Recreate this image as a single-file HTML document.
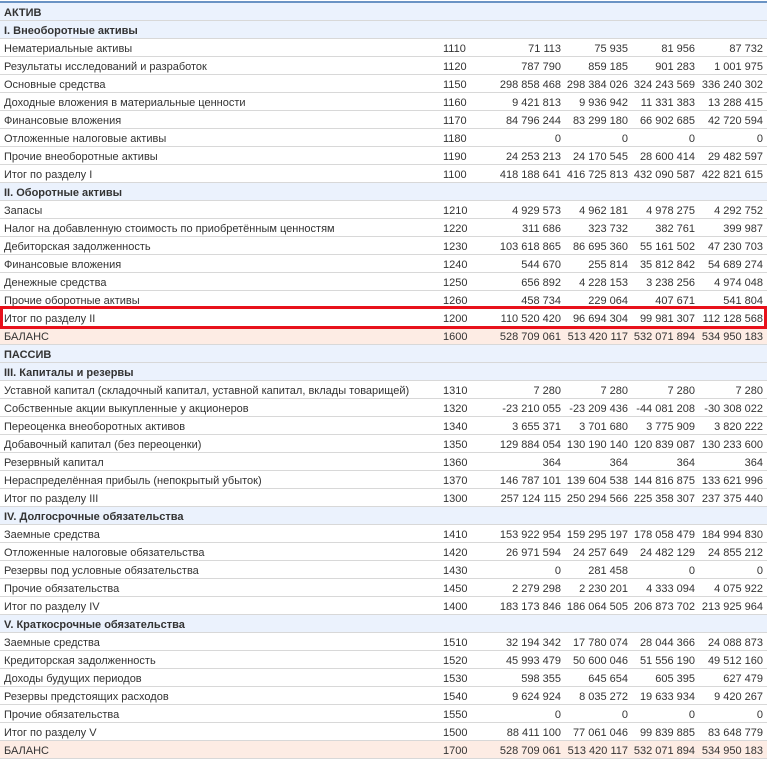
<!DOCTYPE html>
<html><head><meta charset="utf-8"><style>
body{margin:0;width:767px;height:758px;overflow:hidden;background:#fff;font-family:"Liberation Sans",Arial,sans-serif;font-size:11px;color:#333;position:relative}
.top{position:absolute;left:0;top:1px;width:767px;height:2px;background:#6a93c4}
.r{position:absolute;left:0;width:767px;height:17px;border-bottom:1px solid #d8d8d8;line-height:18px;white-space:nowrap}
.r span{position:absolute;top:1px}
.h{background:#ebf2fd;font-weight:bold}
.b{background:#fdece4}
.t{left:4px}.c{left:443px}.n1{right:206px}.n2{right:139px}.n3{right:72px}.n4{right:4px}
.red{position:absolute;left:0;top:306px;width:761px;height:17px;border:3px solid #e8111b}
</style></head><body>
<div class="top"></div>
<div class="r h" style="top:3px"><span class="t">АКТИВ</span></div>
<div class="r h" style="top:21px"><span class="t">I. Внеоборотные активы</span></div>
<div class="r" style="top:39px"><span class="t">Нематериальные активы</span><span class="c">1110</span><span class="n1">71 113</span><span class="n2">75 935</span><span class="n3">81 956</span><span class="n4">87 732</span></div>
<div class="r" style="top:57px"><span class="t">Результаты исследований и разработок</span><span class="c">1120</span><span class="n1">787 790</span><span class="n2">859 185</span><span class="n3">901 283</span><span class="n4">1 001 975</span></div>
<div class="r" style="top:75px"><span class="t">Основные средства</span><span class="c">1150</span><span class="n1">298 858 468</span><span class="n2">298 384 026</span><span class="n3">324 243 569</span><span class="n4">336 240 302</span></div>
<div class="r" style="top:93px"><span class="t">Доходные вложения в материальные ценности</span><span class="c">1160</span><span class="n1">9 421 813</span><span class="n2">9 936 942</span><span class="n3">11 331 383</span><span class="n4">13 288 415</span></div>
<div class="r" style="top:111px"><span class="t">Финансовые вложения</span><span class="c">1170</span><span class="n1">84 796 244</span><span class="n2">83 299 180</span><span class="n3">66 902 685</span><span class="n4">42 720 594</span></div>
<div class="r" style="top:129px"><span class="t">Отложенные налоговые активы</span><span class="c">1180</span><span class="n1">0</span><span class="n2">0</span><span class="n3">0</span><span class="n4">0</span></div>
<div class="r" style="top:147px"><span class="t">Прочие внеоборотные активы</span><span class="c">1190</span><span class="n1">24 253 213</span><span class="n2">24 170 545</span><span class="n3">28 600 414</span><span class="n4">29 482 597</span></div>
<div class="r" style="top:165px"><span class="t">Итог по разделу I</span><span class="c">1100</span><span class="n1">418 188 641</span><span class="n2">416 725 813</span><span class="n3">432 090 587</span><span class="n4">422 821 615</span></div>
<div class="r h" style="top:183px"><span class="t">II. Оборотные активы</span></div>
<div class="r" style="top:201px"><span class="t">Запасы</span><span class="c">1210</span><span class="n1">4 929 573</span><span class="n2">4 962 181</span><span class="n3">4 978 275</span><span class="n4">4 292 752</span></div>
<div class="r" style="top:219px"><span class="t">Налог на добавленную стоимость по приобретённым ценностям</span><span class="c">1220</span><span class="n1">311 686</span><span class="n2">323 732</span><span class="n3">382 761</span><span class="n4">399 987</span></div>
<div class="r" style="top:237px"><span class="t">Дебиторская задолженность</span><span class="c">1230</span><span class="n1">103 618 865</span><span class="n2">86 695 360</span><span class="n3">55 161 502</span><span class="n4">47 230 703</span></div>
<div class="r" style="top:255px"><span class="t">Финансовые вложения</span><span class="c">1240</span><span class="n1">544 670</span><span class="n2">255 814</span><span class="n3">35 812 842</span><span class="n4">54 689 274</span></div>
<div class="r" style="top:273px"><span class="t">Денежные средства</span><span class="c">1250</span><span class="n1">656 892</span><span class="n2">4 228 153</span><span class="n3">3 238 256</span><span class="n4">4 974 048</span></div>
<div class="r" style="top:291px"><span class="t">Прочие оборотные активы</span><span class="c">1260</span><span class="n1">458 734</span><span class="n2">229 064</span><span class="n3">407 671</span><span class="n4">541 804</span></div>
<div class="r" style="top:309px"><span class="t">Итог по разделу II</span><span class="c">1200</span><span class="n1">110 520 420</span><span class="n2">96 694 304</span><span class="n3">99 981 307</span><span class="n4">112 128 568</span></div>
<div class="r b" style="top:327px"><span class="t">БАЛАНС</span><span class="c">1600</span><span class="n1">528 709 061</span><span class="n2">513 420 117</span><span class="n3">532 071 894</span><span class="n4">534 950 183</span></div>
<div class="r h" style="top:345px"><span class="t">ПАССИВ</span></div>
<div class="r h" style="top:363px"><span class="t">III. Капиталы и резервы</span></div>
<div class="r" style="top:381px"><span class="t">Уставной капитал (складочный капитал, уставной капитал, вклады товарищей)</span><span class="c">1310</span><span class="n1">7 280</span><span class="n2">7 280</span><span class="n3">7 280</span><span class="n4">7 280</span></div>
<div class="r" style="top:399px"><span class="t">Собственные акции выкупленные у акционеров</span><span class="c">1320</span><span class="n1">-23 210 055</span><span class="n2">-23 209 436</span><span class="n3">-44 081 208</span><span class="n4">-30 308 022</span></div>
<div class="r" style="top:417px"><span class="t">Переоценка внеоборотных активов</span><span class="c">1340</span><span class="n1">3 655 371</span><span class="n2">3 701 680</span><span class="n3">3 775 909</span><span class="n4">3 820 222</span></div>
<div class="r" style="top:435px"><span class="t">Добавочный капитал (без переоценки)</span><span class="c">1350</span><span class="n1">129 884 054</span><span class="n2">130 190 140</span><span class="n3">120 839 087</span><span class="n4">130 233 600</span></div>
<div class="r" style="top:453px"><span class="t">Резервный капитал</span><span class="c">1360</span><span class="n1">364</span><span class="n2">364</span><span class="n3">364</span><span class="n4">364</span></div>
<div class="r" style="top:471px"><span class="t">Нераспределённая прибыль (непокрытый убыток)</span><span class="c">1370</span><span class="n1">146 787 101</span><span class="n2">139 604 538</span><span class="n3">144 816 875</span><span class="n4">133 621 996</span></div>
<div class="r" style="top:489px"><span class="t">Итог по разделу III</span><span class="c">1300</span><span class="n1">257 124 115</span><span class="n2">250 294 566</span><span class="n3">225 358 307</span><span class="n4">237 375 440</span></div>
<div class="r h" style="top:507px"><span class="t">IV. Долгосрочные обязательства</span></div>
<div class="r" style="top:525px"><span class="t">Заемные средства</span><span class="c">1410</span><span class="n1">153 922 954</span><span class="n2">159 295 197</span><span class="n3">178 058 479</span><span class="n4">184 994 830</span></div>
<div class="r" style="top:543px"><span class="t">Отложенные налоговые обязательства</span><span class="c">1420</span><span class="n1">26 971 594</span><span class="n2">24 257 649</span><span class="n3">24 482 129</span><span class="n4">24 855 212</span></div>
<div class="r" style="top:561px"><span class="t">Резервы под условные обязательства</span><span class="c">1430</span><span class="n1">0</span><span class="n2">281 458</span><span class="n3">0</span><span class="n4">0</span></div>
<div class="r" style="top:579px"><span class="t">Прочие обязательства</span><span class="c">1450</span><span class="n1">2 279 298</span><span class="n2">2 230 201</span><span class="n3">4 333 094</span><span class="n4">4 075 922</span></div>
<div class="r" style="top:597px"><span class="t">Итог по разделу IV</span><span class="c">1400</span><span class="n1">183 173 846</span><span class="n2">186 064 505</span><span class="n3">206 873 702</span><span class="n4">213 925 964</span></div>
<div class="r h" style="top:615px"><span class="t">V. Краткосрочные обязательства</span></div>
<div class="r" style="top:633px"><span class="t">Заемные средства</span><span class="c">1510</span><span class="n1">32 194 342</span><span class="n2">17 780 074</span><span class="n3">28 044 366</span><span class="n4">24 088 873</span></div>
<div class="r" style="top:651px"><span class="t">Кредиторская задолженность</span><span class="c">1520</span><span class="n1">45 993 479</span><span class="n2">50 600 046</span><span class="n3">51 556 190</span><span class="n4">49 512 160</span></div>
<div class="r" style="top:669px"><span class="t">Доходы будущих периодов</span><span class="c">1530</span><span class="n1">598 355</span><span class="n2">645 654</span><span class="n3">605 395</span><span class="n4">627 479</span></div>
<div class="r" style="top:687px"><span class="t">Резервы предстоящих расходов</span><span class="c">1540</span><span class="n1">9 624 924</span><span class="n2">8 035 272</span><span class="n3">19 633 934</span><span class="n4">9 420 267</span></div>
<div class="r" style="top:705px"><span class="t">Прочие обязательства</span><span class="c">1550</span><span class="n1">0</span><span class="n2">0</span><span class="n3">0</span><span class="n4">0</span></div>
<div class="r" style="top:723px"><span class="t">Итог по разделу V</span><span class="c">1500</span><span class="n1">88 411 100</span><span class="n2">77 061 046</span><span class="n3">99 839 885</span><span class="n4">83 648 779</span></div>
<div class="r b" style="top:741px"><span class="t">БАЛАНС</span><span class="c">1700</span><span class="n1">528 709 061</span><span class="n2">513 420 117</span><span class="n3">532 071 894</span><span class="n4">534 950 183</span></div>
<div class="red"></div>
</body></html>
